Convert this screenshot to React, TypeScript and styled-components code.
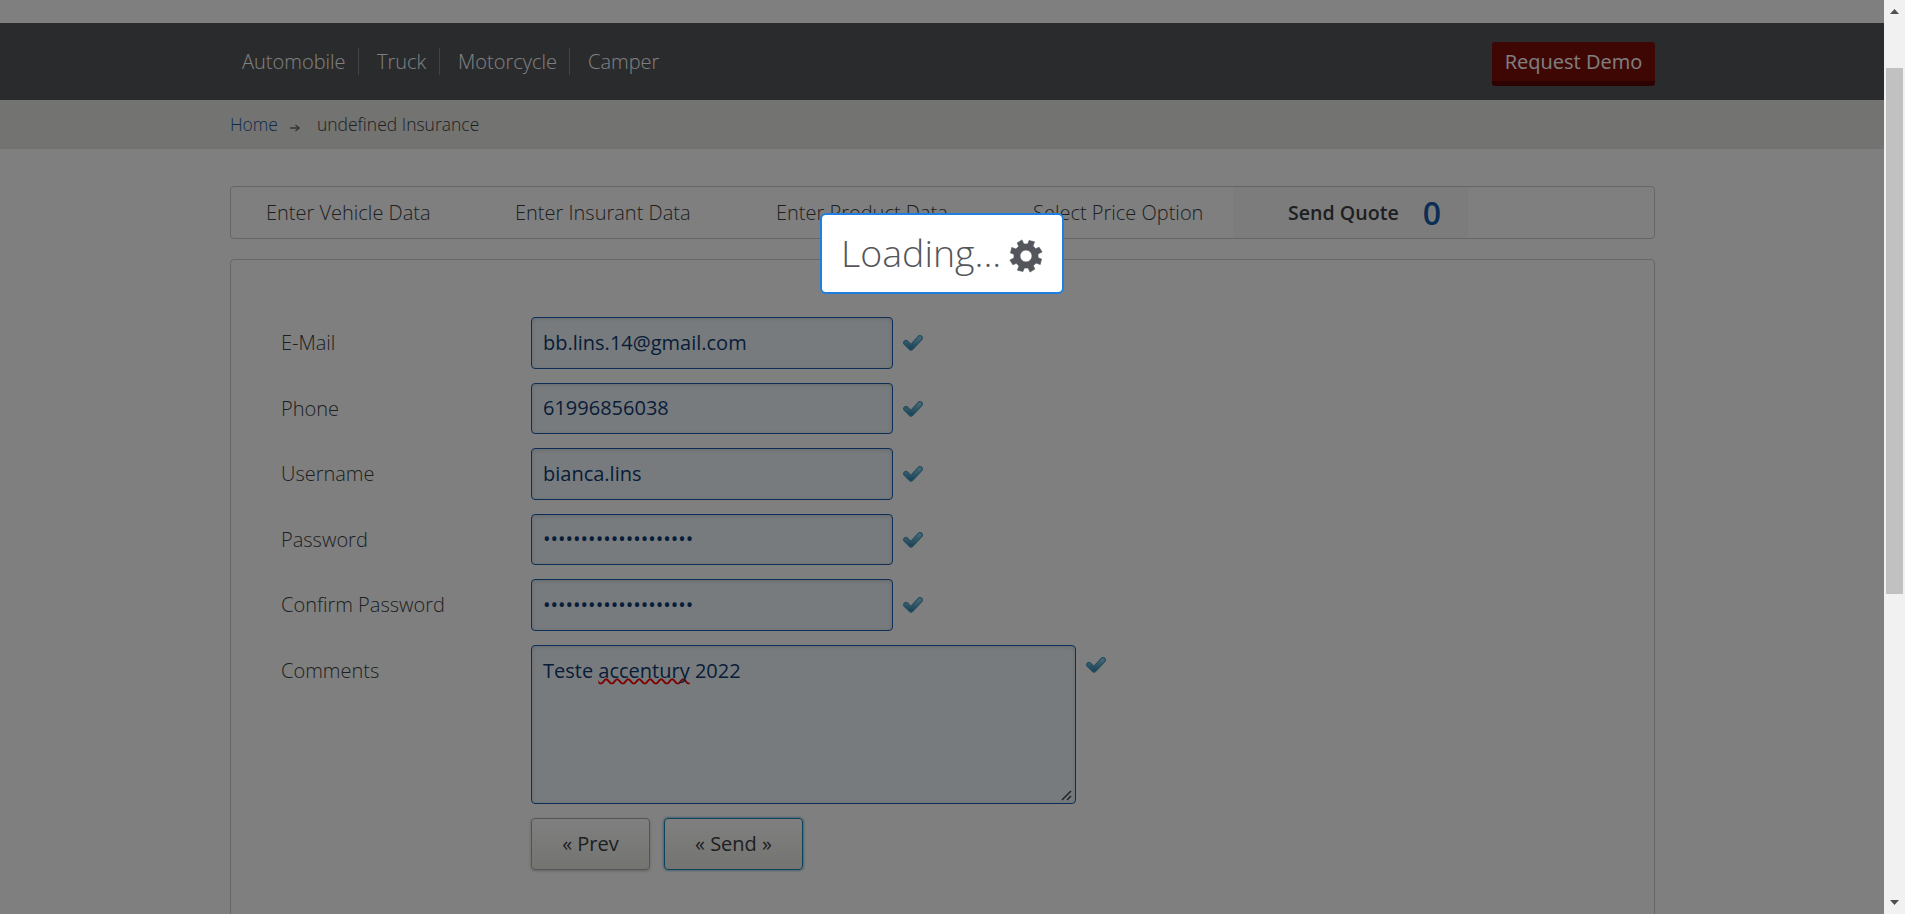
import React from "react";
import styled, { createGlobalStyle } from "styled-components";

const Global = createGlobalStyle`
  html, body { margin: 0; height: 100%; overflow: hidden; background: #fff; }
  * { box-sizing: border-box; }
  body { font-family: "Open Sans", "Noto Sans", sans-serif; font-weight: 300; font-size: 20px; color: #3b3e43; }
`;

const Window = styled.div`
  display: flex;
  width: 1905px;
  height: 914px;
  overflow: hidden;
`;

const Page = styled.div`
  width: 1884px;
  flex: none;
  height: 914px;
  overflow: hidden;
  padding-top: 23px;
  position: relative;
`;

const Container = styled.div`
  width: 1425px;
  margin-left: 230px;
  display: flex;
  align-items: center;
  height: 100%;
`;

const Header = styled.header`
  height: 77px;
  background: #53565a;
`;

const Nav = styled.nav`
  display: flex;
  flex: 1;
  margin-left: -6px;
`;

const NavLink = styled.a<{ $w: number }>`
  width: ${(p) => p.$w}px;
  height: 27px;
  padding-left: 18px;
  line-height: 28px;
  color: #fff;
  white-space: nowrap;
  border-right: 1px solid #868686;
  &:last-child { border-right: 0; }
`;

const DemoButton = styled.button`
  width: 163px;
  height: 44px;
  margin-top: 5px;
  padding: 0 0 1px;
  border: 0;
  border-bottom: 5px solid #5b0703;
  border-radius: 3px;
  background: #7e0e09;
  color: #fff;
  font: 400 20px "Open Sans", sans-serif;
  white-space: nowrap;
`;

const Crumbs = styled.div`
  height: 49px;
  background: #e7e7e2;
  font-size: 17.5px;
`;

const Crumb = styled.span<{ $link?: boolean }>`
  color: ${(p) => (p.$link ? "#1a559f" : "#3b3e43")};
  line-height: 24px;
  padding-bottom: 2px;
`;

const Arrow = styled.svg`
  width: 10px;
  height: 8px;
  margin: 6px 17px 0 12px;
`;

const Steps = styled.div`
  display: flex;
  width: 1425px;
  height: 53px;
  margin: 37px 0 20px 230px;
  padding-left: 35px;
  border: 1px solid #ccc;
  border-radius: 4px;
`;

const Step = styled.div<{ $w: number; $active?: boolean }>`
  display: flex;
  align-items: center;
  width: ${(p) => p.$w}px;
  white-space: nowrap;
  ${(p) => p.$active && "background: #f9f9f9; padding-left: 55px; font-weight: 570; font-size: 19.6px;"}
`;

const Counter = styled.span`
  margin-left: 24px;
  font-size: 32px;
  font-weight: 560;
  line-height: 40px;
  color: #185ca8;
`;

const Panel = styled.form`
  width: 1425px;
  height: 700px;
  margin-left: 230px;
  padding: 57px 0 0 50px;
  border: 1px solid #ccc;
  border-radius: 4px;
`;

const Row = styled.div<{ $h?: number }>`
  display: flex;
  height: ${(p) => p.$h ?? 65.5}px;
`;

const Label = styled.label`
  width: 250px;
  line-height: 51.5px;
`;

const Input = styled.input`
  width: 362px;
  height: 51.5px;
  padding: 0 11px 1px;
  border: 1px solid #1a5cae;
  border-radius: 4px;
  background: #f0f7fb;
  box-shadow: inset 0 1px 4px rgba(0, 0, 0, 0.15);
  color: #0f3b72;
  font: 400 20px "Open Sans", sans-serif;
`;

const Comments = styled.div`
  position: relative;
  width: 545px;
  height: 159px;
  padding: 11px;
  border: 1px solid #1a5cae;
  border-radius: 4px;
  background: #f0f7fb;
  box-shadow: inset 0 1px 4px rgba(0, 0, 0, 0.15);
  color: #0f3b72;
  font-weight: 400;
  line-height: 28px;
`;

const Misspelt = styled.span`
  text-decoration: underline wavy #f00 1.6px;
  text-decoration-skip-ink: none;
  text-underline-offset: 0px;
`;

const Grip = styled.svg`
  position: absolute;
  right: 3px;
  bottom: 2px;
  width: 11px;
  height: 11px;
`;

const CheckSvg = styled.svg<{ $top: number }>`
  width: 20px;
  height: 16px;
  margin: ${(p) => p.$top}px 0 0 10px;
`;

const Actions = styled.div`
  display: flex;
  gap: 14px;
  margin: 14px 0 0 250px;
`;

const Button = styled.button<{ $w: number; $focus?: boolean }>`
  width: ${(p) => p.$w}px;
  height: 52px;
  padding: 0;
  border: 1px solid ${(p) => (p.$focus ? "#1f86b8" : "#aaa")};
  border-radius: 4px;
  background: linear-gradient(#fff, #e8e8e3);
  box-shadow: ${(p) => (p.$focus ? "0 0 3px #1f86b8" : "0 1px 3px rgba(0, 0, 0, 0.25)")};
  color: #3b3e43;
  font: 400 20px "Open Sans", sans-serif;
`;

const Overlay = styled.div`
  position: absolute;
  inset: 0;
  background: rgba(0, 0, 0, 0.5);
`;

const Dialog = styled.div`
  position: absolute;
  left: 820px;
  top: 213px;
  display: flex;
  align-items: center;
  width: 244px;
  height: 81px;
  padding-left: 19px;
  border: 2px solid #1e7fe0;
  border-radius: 6px;
  background: #fff;
  color: #53565a;
  font-size: 37.5px;
  white-space: nowrap;
`;

const DialogText = styled.span`
  width: 168px;
  line-height: 50px;
  padding-bottom: 2px;
`;

const Gear = styled.svg`
  width: 34px;
  height: 34px;
  flex: none;
  margin-top: 4px;
`;

const Scrollbar = styled.div`
  display: flex;
  flex-direction: column;
  justify-content: space-between;
  align-items: center;
  width: 21px;
  height: 914px;
  padding: 9px 0;
  background: #f1f1f1;
`;

const Thumb = styled.div`
  width: 17px;
  height: 526px;
  margin: 54px 0 auto;
  background: #c1c1c1;
`;

const Chevron = styled.svg`
  width: 9px;
  height: 5px;
  display: block;
`;

// Eight-toothed cog with a round hole, drawn around (17, 17).
const gearPath = () => {
  const pts: string[] = [];
  for (let i = 0; i < 8; i++) {
    const base = i * 45 + 22;
    [[-14, 12.2], [-11, 15.8], [9, 16.6], [13, 12.2]].forEach(([a, r]) => {
      const t = ((base + a) * Math.PI) / 180;
      pts.push(`${(17 + r * Math.sin(t)).toFixed(2)} ${(17 - r * Math.cos(t)).toFixed(2)}`);
    });
  }
  return `M${pts.join("L")}Z M23 17a6 6 0 1 0-12 0a6 6 0 1 0 12 0Z`;
};

const Check = ({ top = 18 }: { top?: number }) => (
  <CheckSvg $top={top} viewBox="0 0 20 16">
    <defs>
      <linearGradient id="tick" x1="0" y1="0" x2="0" y2="1">
        <stop offset="0" stopColor="#8bcde8" />
        <stop offset="1" stopColor="#3a8db4" />
      </linearGradient>
    </defs>
    <path d="M3 7.8L8 12.8L17 3" fill="none" stroke="#4d9dbd" strokeWidth="5.8" strokeLinecap="round" strokeLinejoin="round" />
    <path d="M3 7.8L8 12.8L17 3" fill="none" stroke="url(#tick)" strokeWidth="3.6" strokeLinecap="round" strokeLinejoin="round" />
  </CheckSvg>
);

const fields = [
  { label: "E-Mail", value: "bb.lins.14@gmail.com", type: "text" },
  { label: "Phone", value: "61996856038", type: "text" },
  { label: "Username", value: "bianca.lins", type: "text" },
  { label: "Password", value: "abcdefghijklmnopqrst", type: "password" },
  { label: "Confirm Password", value: "abcdefghijklmnopqrst", type: "password" },
];

export default function App() {
  return (
    <Window>
      <Global />
      <Page>
        <Header>
          <Container>
            <Nav>
              <NavLink $w={135}>Automobile</NavLink>
              <NavLink $w={81}>Truck</NavLink>
              <NavLink $w={130}>Motorcycle</NavLink>
              <NavLink $w={110}>Camper</NavLink>
            </Nav>
            <DemoButton>Request Demo</DemoButton>
          </Container>
        </Header>
        <Crumbs>
          <Container>
            <Crumb $link>Home</Crumb>
            <Arrow viewBox="0 0 10 8">
              <path d="M0 4H9M5.5 1L9 4L5.5 7" fill="none" stroke="#6d7075" strokeWidth="1.5" />
            </Arrow>
            <Crumb>undefined Insurance</Crumb>
          </Container>
        </Crumbs>
        <Steps>
          <Step $w={249}>Enter Vehicle Data</Step>
          <Step $w={261}>Enter Insurant Data</Step>
          <Step $w={257}>Enter Product Data</Step>
          <Step $w={200}>Select Price Option</Step>
          <Step $w={235} $active>
            Send Quote<Counter>0</Counter>
          </Step>
        </Steps>
        <Panel>
          {fields.map((f) => (
            <Row key={f.label}>
              <Label>{f.label}</Label>
              <Input type={f.type} value={f.value} readOnly />
              <Check />
            </Row>
          ))}
          <Row $h={159}>
            <Label>Comments</Label>
            <Comments>
              Teste <Misspelt>accentury</Misspelt> 2022
              <Grip viewBox="0 0 11 11">
                <path d="M1 10L10 1M6 10L10 6" stroke="#444" strokeWidth="1.5" />
              </Grip>
            </Comments>
            <Check top={12} />
          </Row>
          <Actions>
            <Button type="button" $w={119}>« Prev</Button>
            <Button type="button" $w={139} $focus>« Send »</Button>
          </Actions>
        </Panel>
        <Overlay />
        <Dialog>
          <DialogText>Loading...</DialogText>
          <Gear viewBox="0 0 34 34">
            <path d={gearPath()} fill="#53565a" fillRule="evenodd" stroke="#53565a" strokeWidth="0.6" strokeLinejoin="round" />
          </Gear>
        </Dialog>
      </Page>
      <Scrollbar>
        <Chevron viewBox="0 0 9 5"><path d="M0 5L4.5 0L9 5Z" fill="#505050" /></Chevron>
        <Thumb />
        <Chevron viewBox="0 0 9 5"><path d="M0 0L4.5 5L9 0Z" fill="#505050" /></Chevron>
      </Scrollbar>
    </Window>
  );
}
